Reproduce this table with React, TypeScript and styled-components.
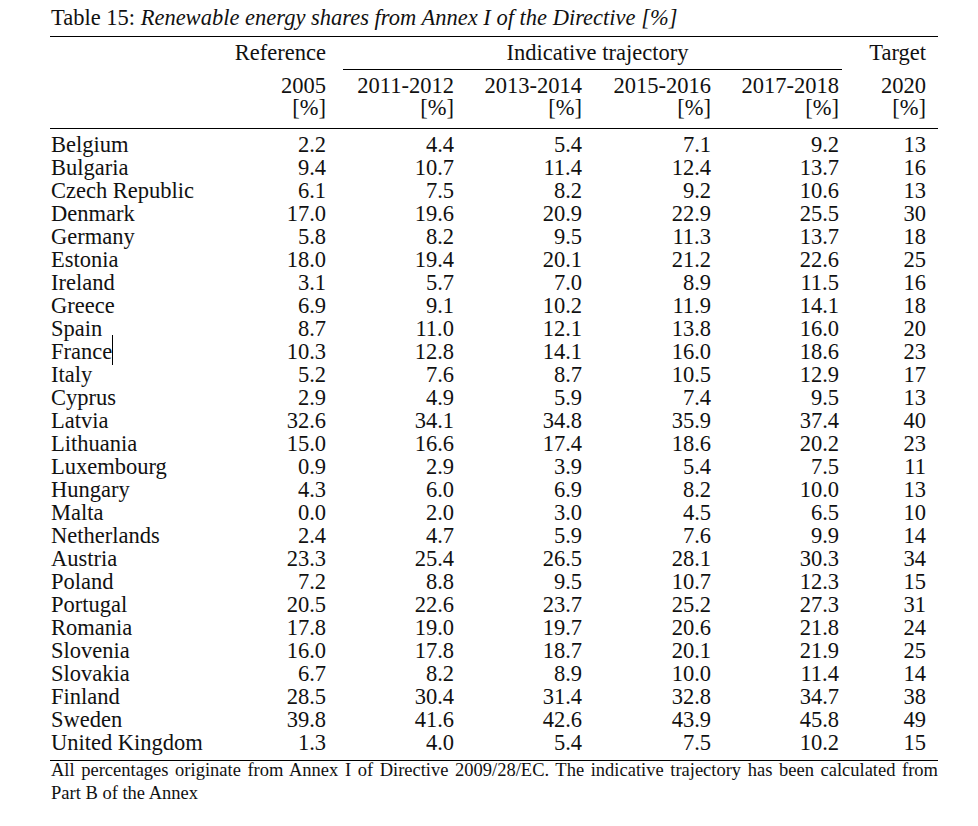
import styled, { createGlobalStyle } from 'styled-components'

const GlobalStyle = createGlobalStyle`
  html, body {
    margin: 0;
    padding: 0;
    background: #fff;
  }
  body {
    font-family: 'Liberation Serif', 'Times New Roman', serif;
    color: #111;
  }
`

const COLS = '164px 124px 128px 128px 129px 128px 87px'

const Page = styled.div`
  width: 978px;
  height: 826px;
  padding: 6px 0 0 50px;
  box-sizing: border-box;
`
const Caption = styled.div`
  font-size: 22.5px;
  line-height: 23px;
  margin: 0 0 7px 1px;
  white-space: nowrap;
  em {
    font-style: italic;
  }
`
const Table = styled.div`
  width: 888px;
  border-top: 1px solid #000;
  border-bottom: 1px solid #000;
  font-size: 22.5px;
`
const Head = styled.div`
  padding: 4px 0 9px;
  border-bottom: 1px solid #000;
`
const Row = styled.div<{ $gap?: number }>`
  display: grid;
  grid-template-columns: ${COLS};
  align-items: start;
  margin-top: ${p => p.$gap ?? 0}px;
`
const Cell = styled.div<{ $first?: boolean }>`
  height: 23px;
  line-height: 23px;
  text-align: ${p => (p.$first ? 'left' : 'right')};
  padding: ${p => (p.$first ? '0 0 0 1px' : '0 12px 0 0')};
  white-space: nowrap;
`
const GroupCell = styled.div`
  grid-column: 3 / 7;
  margin: 0 9px 0 5px;
  padding: 0 0 5px 10px;
  line-height: 23px;
  text-align: center;
  border-bottom: 1px solid #000;
`
const YearCell = styled.div`
  line-height: 22px;
  text-align: right;
  padding-right: 12px;
  white-space: nowrap;
`
const Body = styled.div`
  padding: 4px 0 6px;
`
// text cursor left in the screenshot after "France"
const Caret = styled.span`
  display: inline-block;
  width: 1px;
  height: 30px;
  margin: -5px 0 -6px;
  background: #000;
  vertical-align: baseline;
`
const Note = styled.p`
  width: 888px;
  margin: -2px 0 0;
  font-size: 18.5px;
  line-height: 23px;
  text-align: justify;
  padding-left: 1px;
  box-sizing: border-box;
`

const years = ['2005', '2011-2012', '2013-2014', '2015-2016', '2017-2018', '2020']

const rows: [string, string[]][] = [
  ['Belgium', ['2.2', '4.4', '5.4', '7.1', '9.2', '13']],
  ['Bulgaria', ['9.4', '10.7', '11.4', '12.4', '13.7', '16']],
  ['Czech Republic', ['6.1', '7.5', '8.2', '9.2', '10.6', '13']],
  ['Denmark', ['17.0', '19.6', '20.9', '22.9', '25.5', '30']],
  ['Germany', ['5.8', '8.2', '9.5', '11.3', '13.7', '18']],
  ['Estonia', ['18.0', '19.4', '20.1', '21.2', '22.6', '25']],
  ['Ireland', ['3.1', '5.7', '7.0', '8.9', '11.5', '16']],
  ['Greece', ['6.9', '9.1', '10.2', '11.9', '14.1', '18']],
  ['Spain', ['8.7', '11.0', '12.1', '13.8', '16.0', '20']],
  ['France', ['10.3', '12.8', '14.1', '16.0', '18.6', '23']],
  ['Italy', ['5.2', '7.6', '8.7', '10.5', '12.9', '17']],
  ['Cyprus', ['2.9', '4.9', '5.9', '7.4', '9.5', '13']],
  ['Latvia', ['32.6', '34.1', '34.8', '35.9', '37.4', '40']],
  ['Lithuania', ['15.0', '16.6', '17.4', '18.6', '20.2', '23']],
  ['Luxembourg', ['0.9', '2.9', '3.9', '5.4', '7.5', '11']],
  ['Hungary', ['4.3', '6.0', '6.9', '8.2', '10.0', '13']],
  ['Malta', ['0.0', '2.0', '3.0', '4.5', '6.5', '10']],
  ['Netherlands', ['2.4', '4.7', '5.9', '7.6', '9.9', '14']],
  ['Austria', ['23.3', '25.4', '26.5', '28.1', '30.3', '34']],
  ['Poland', ['7.2', '8.8', '9.5', '10.7', '12.3', '15']],
  ['Portugal', ['20.5', '22.6', '23.7', '25.2', '27.3', '31']],
  ['Romania', ['17.8', '19.0', '19.7', '20.6', '21.8', '24']],
  ['Slovenia', ['16.0', '17.8', '18.7', '20.1', '21.9', '25']],
  ['Slovakia', ['6.7', '8.2', '8.9', '10.0', '11.4', '14']],
  ['Finland', ['28.5', '30.4', '31.4', '32.8', '34.7', '38']],
  ['Sweden', ['39.8', '41.6', '42.6', '43.9', '45.8', '49']],
  ['United Kingdom', ['1.3', '4.0', '5.4', '7.5', '10.2', '15']],
]

export default function App() {
  return (
    <>
      <GlobalStyle />
      <Page>
        <Caption>
          Table 15: <em>Renewable energy shares from Annex I of the Directive [%]</em>
        </Caption>
        <Table>
          <Head>
            <Row>
              <Cell $first />
              <Cell>Reference</Cell>
              <GroupCell>Indicative trajectory</GroupCell>
              <Cell>Target</Cell>
            </Row>
            <Row $gap={5}>
              <Cell $first />
              {years.map(y => (
                <YearCell key={y}>
                  {y}
                  <br />
                  [%]
                </YearCell>
              ))}
            </Row>
          </Head>
          <Body>
            {rows.map(([country, values]) => (
              <Row key={country}>
                <Cell $first>
                  {country}
                  {country === 'France' && <Caret />}
                </Cell>
                {values.map((v, i) => (
                  <Cell key={i}>{v}</Cell>
                ))}
              </Row>
            ))}
          </Body>
        </Table>
        <Note>
          All percentages originate from Annex I of Directive 2009/28/EC. The indicative trajectory
          has been calculated from Part B of the Annex
        </Note>
      </Page>
    </>
  )
}
